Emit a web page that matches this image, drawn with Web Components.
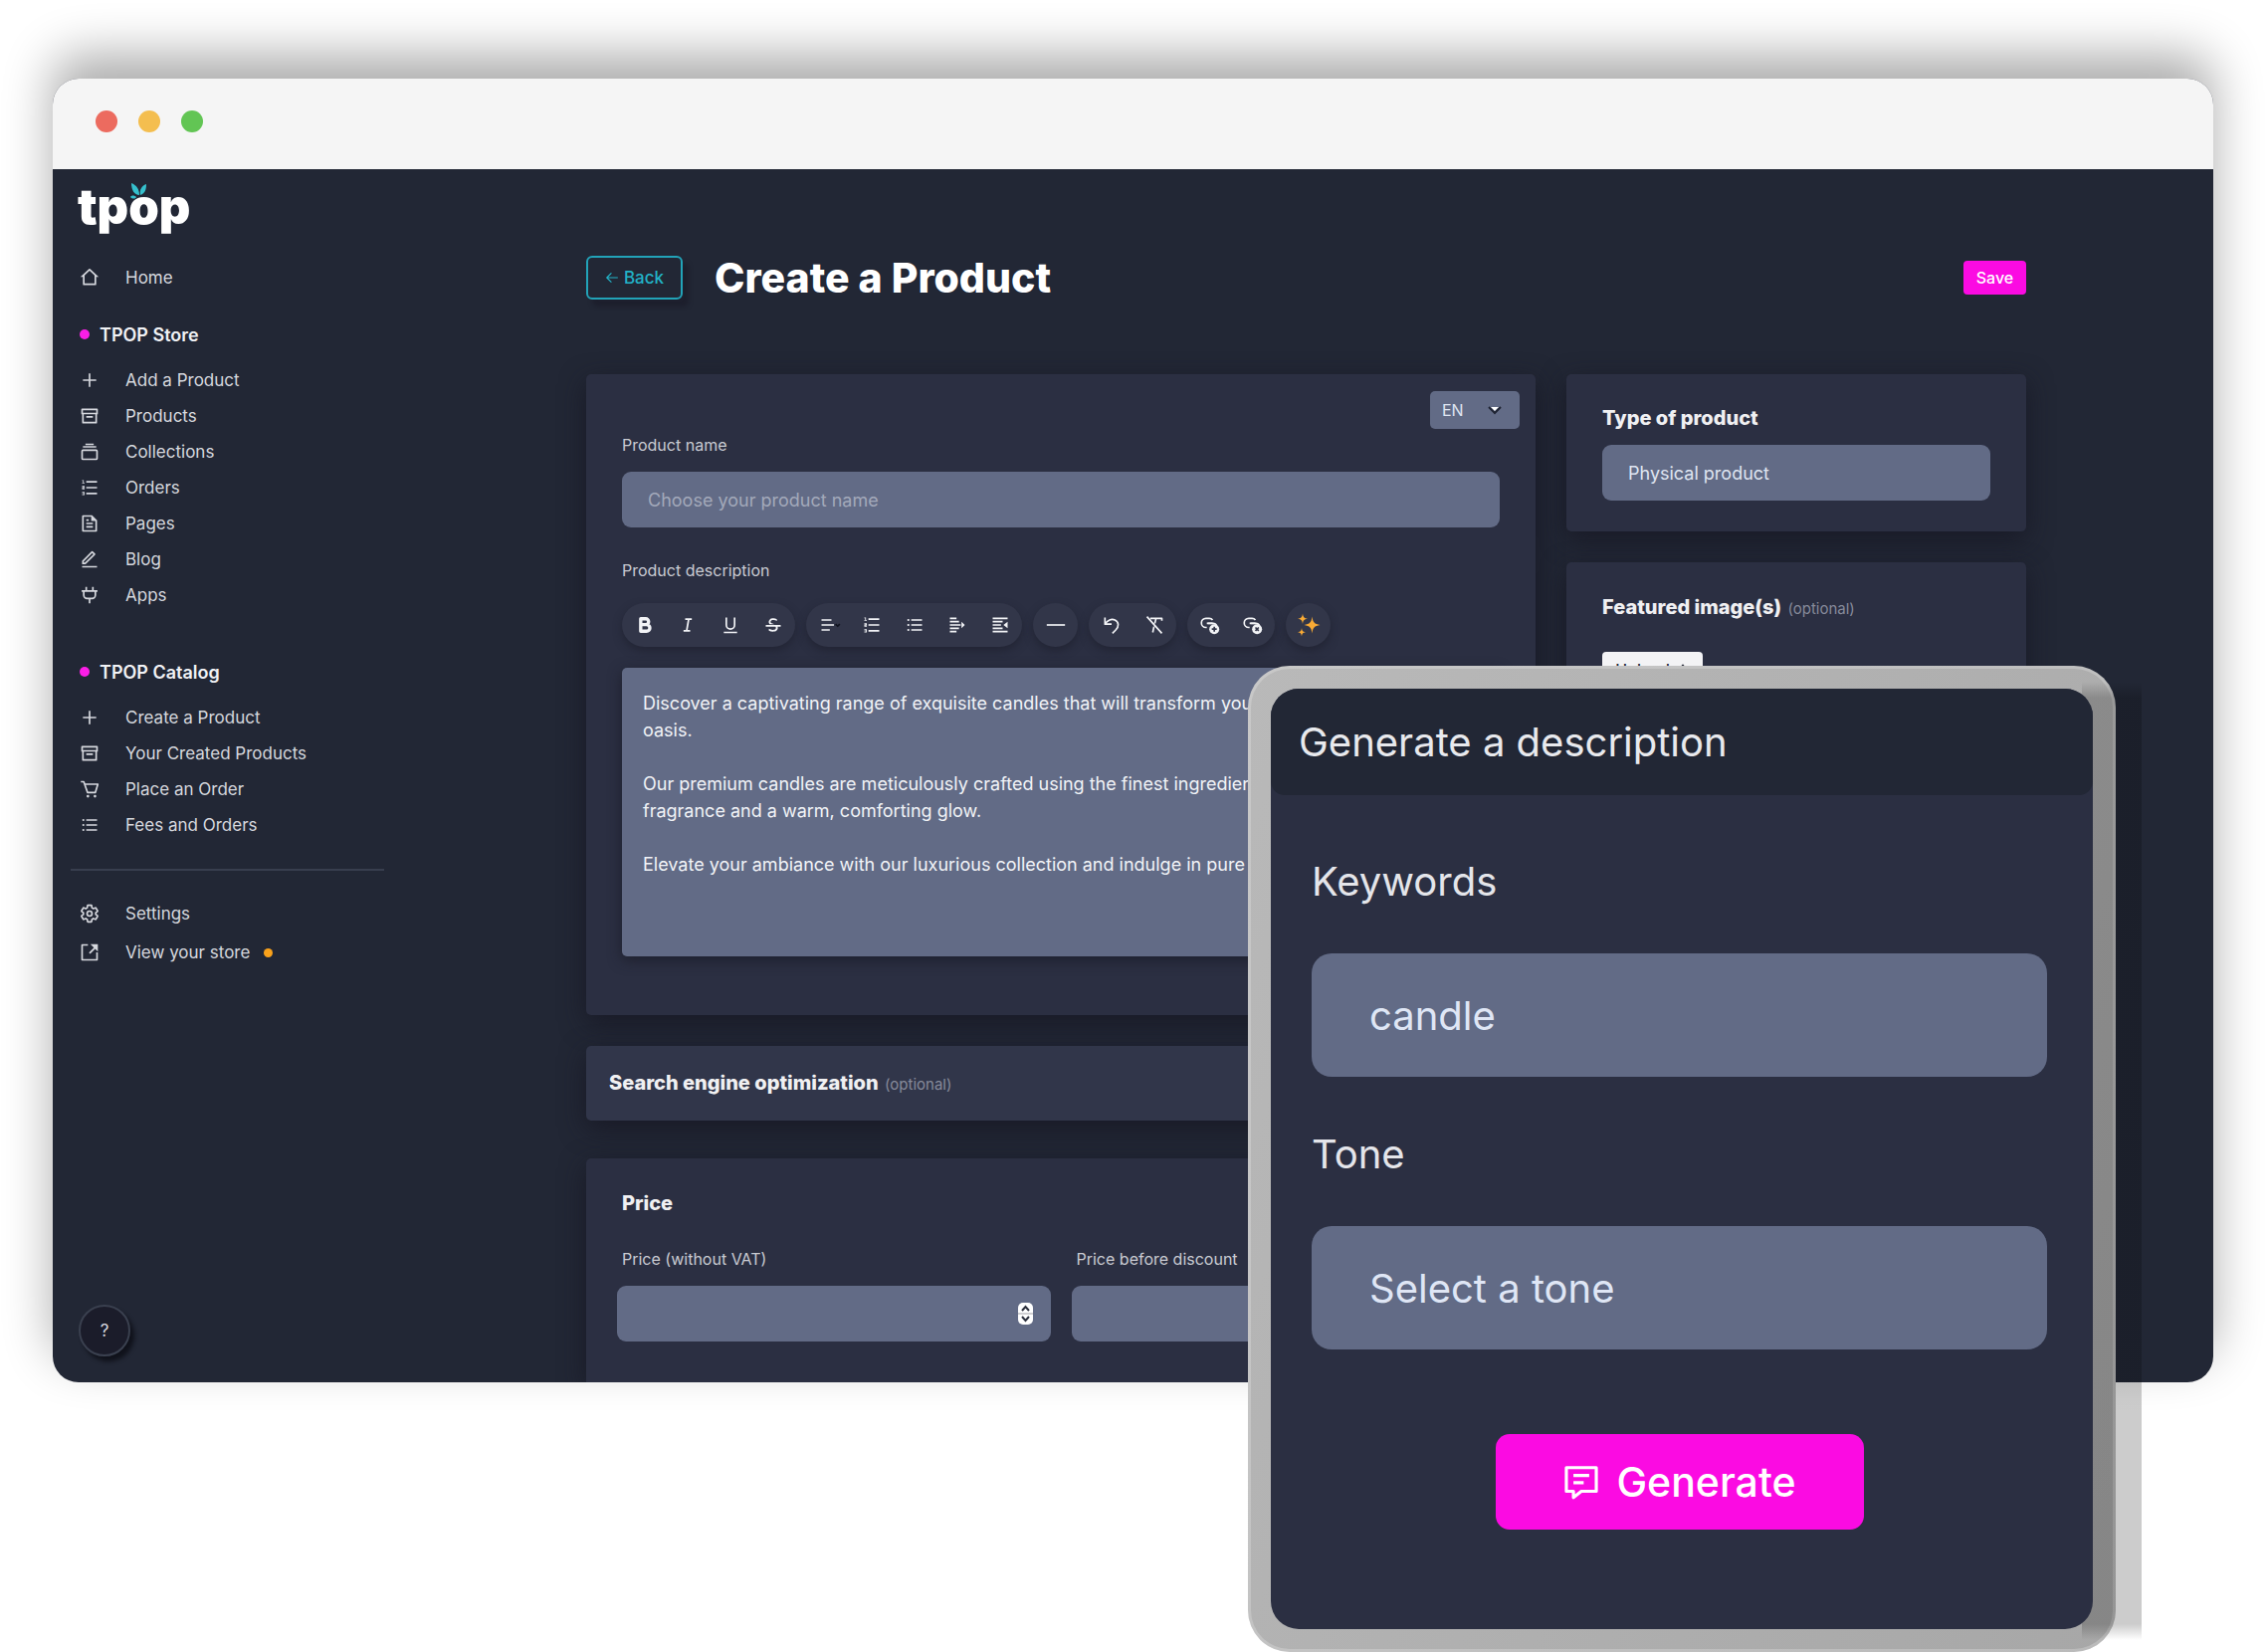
<!DOCTYPE html>
<html lang="en">
<head>
<meta charset="utf-8">
<title>Create a Product</title>
<style>
    body {
        margin: 0;
        background: #ffffff;
        font-family: Inter, "Liberation Sans", sans-serif;
        color: #dcdee4;
    }
</style>
</head>
<body>
<tp-stage>
    <browser-window>
        <side-nav slot="sidebar">
            <nav-item icon="home">Home</nav-item>
            <nav-group slot="group" heading="TPOP Store">
                <nav-item icon="add">Add a Product</nav-item>
                <nav-item icon="archive">Products</nav-item>
                <nav-item icon="stack">Collections</nav-item>
                <nav-item icon="ordered">Orders</nav-item>
                <nav-item icon="file">Pages</nav-item>
                <nav-item icon="edit">Blog</nav-item>
                <nav-item icon="plug">Apps</nav-item>
            </nav-group>
            <nav-group slot="group" heading="TPOP Catalog">
                <nav-item icon="add">Create a Product</nav-item>
                <nav-item icon="archive">Your Created Products</nav-item>
                <nav-item icon="cart">Place an Order</nav-item>
                <nav-item icon="unordered">Fees and Orders</nav-item>
            </nav-group>
            <nav-item slot="footer" icon="settings">Settings</nav-item>
            <nav-item slot="footer" icon="external" status>View your store</nav-item>
        </side-nav>
        <product-page></product-page>
    </browser-window>
    <generate-dialog slot="overlay"></generate-dialog>
</tp-stage>

<script>
const ICONS = {
    home: '<path d="M19 21H5a1 1 0 0 1-1-1v-9H1l10.3-9.4a1 1 0 0 1 1.4 0L23 11h-3v9a1 1 0 0 1-1 1zM6 19h12V9.2l-6-5.5-6 5.5V19z"/>',
    add: '<path d="M11 11V4h2v7h7v2h-7v7h-2v-7H4v-2z"/>',
    archive: '<path d="M3 10H2V4a1 1 0 0 1 1-1h18a1 1 0 0 1 1 1v6h-1v10a1 1 0 0 1-1 1H4a1 1 0 0 1-1-1V10zm16 0H5v9h14v-9zM4 5v3h16V5H4zm4 7h8v2H8v-2z"/>',
    stack: '<path d="M7 2h10v2H7zM4 5h16v2H4zM4 9h16a2 2 0 0 1 2 2v9a2 2 0 0 1-2 2H4a2 2 0 0 1-2-2v-9a2 2 0 0 1 2-2zm0 2v9h16v-9H4z"/>',
    ordered: '<path d="M8 4h13v2H8V4zM5 3v3h1v1H3V6h1V4H3V3h2zM3 14v-2.5h2V11H3v-1h3v2.5H4v.5h2v1H3zm2 5.5H3v-1h2V18H3v-1h3v4H3v-1h2v-.5zM8 11h13v2H8v-2zm0 7h13v2H8v-2z"/>',
    unordered: '<path d="M8 5h13v2H8V5zM8 11h13v2H8v-2zm0 6h13v2H8v-2z"/><circle cx="4.5" cy="6" r="1.3"/><circle cx="4.5" cy="12" r="1.3"/><circle cx="4.5" cy="18" r="1.3"/>',
    file: '<path d="M21 8v13a1 1 0 0 1-1 1H4a1 1 0 0 1-1-1V3a1 1 0 0 1 1-1h11l6 6zm-2 1h-5V4H5v16h14V9zM8 7h3v2H8V7zm0 4h8v2H8v-2zm0 4h8v2H8v-2z"/>',
    edit: '<path d="M6.4 16L16.6 5.9l-1.5-1.5L5 14.6V16h1.4zm.8 2H3v-4.2L14.4 2.3a1 1 0 0 1 1.4 0l2.9 2.9a1 1 0 0 1 0 1.4L7.2 18zM3 20h18v2H3v-2z"/>',
    plug: '<path d="M2.500 7h19M8 2v5M16 2v5M5 7v5a4 4 0 0 0 4 4h6a4 4 0 0 0 4-4V7M12 16v6" class="line"/>',
    cart: '<path d="M1.500 3H5l4.500 13h9.500l3-10H6" class="line"/><circle cx="10" cy="20.500" r="1.600"/><circle cx="18.500" cy="20.500" r="1.600"/>',
    settings: '<path class="line" d="M19.430 12.980c.04-.32.07-.64.07-.98 0-.34-.03-.66-.07-.98l2.110-1.650c.19-.15.24-.42.12-.64l-2-3.460c-.09-.16-.26-.25-.44-.25l-2.660.97c-.52-.4-1.080-.73-1.690-.98l-.38-2.650C14.460 2.180 14.250 2 14 2h-4c-.25 0-.46.18-.49.42l-.38 2.650c-.61.25-1.170.59-1.690.98l-2.490-1c-.23-.09-.49 0-.61.22l-2 3.460c-.13.22-.07.49.12.64l2.110 1.650c-.04.32-.07.65-.07.98 0 .33.03.66.07.98l-2.110 1.650c-.19.15-.24.42-.12.64l2 3.460c.12.22.38.3.61.22l2.490-1c.52.4 1.080.73 1.690.98l.38 2.650c.03.24.24.42.49.42h4c.25 0 .46-.18.49-.42l.38-2.650c.61-.25 1.170-.59 1.690-.98l2.490 1c.23.09.49 0 .61-.22l2-3.460c.12-.22.07-.49-.12-.64z"/><circle class="line" cx="12" cy="12" r="3"/>',
    external: '<path d="M10 2v2H4v16h16v-8h2v9a1 1 0 0 1-1 1H3a1 1 0 0 1-1-1V3a1 1 0 0 1 1-1h7zM13 2h9v9l-3.300-3.300-6 6-1.500-1.500 6-6z"/>',
    back: '<path class="line" d="M22 12H3M11 4l-8 8 8 8"/>',
    upload: '<path d="M12 2l8 9h-5v10H9V11H4z"/>',
    bold: '<path style="stroke-width:4" class="line" d="M7 4.500h6a3.500 3.500 0 0 1 0 7H7zM7 11.500h7a4 4 0 0 1 0 8H7z"/>',
    italic: '<path d="M15 20H7v-2h2.900l2.100-12H9V4h8v2h-2.900l-2.100 12H15z"/>',
    underline: '<path d="M8 3v9a4 4 0 1 0 8 0V3h2v9a6 6 0 1 1-12 0V3h2zM4 20h16v2H4v-2z"/>',
    strike: '<path d="M17.200 14c.2.500.3 1.100.3 1.700 0 1.300-.5 2.400-1.600 3.200-1 .7-2.500 1.100-4.300 1.100-1.600 0-3.300-.4-4.900-1.100v-2.300c1.500.9 3.100 1.300 4.700 1.300 2.500 0 3.800-.7 3.800-2.200 0-.6-.2-1.200-.6-1.600l-.1-.1H3v-2h18v2h-3.800zm-4.100-3H7.600c-.7-.8-1.100-1.600-1.100-2.500 0-1.300.5-2.300 1.400-3.200C8.800 4.400 10.300 4 12.200 4c1.500 0 2.900.3 4.200 1v2.100c-1.200-.7-2.500-1-3.900-1-2.500 0-3.700.8-3.700 2.300 0 .4.200.8.6 1.100.4.3 1 .6 1.600.8.600.2 1.300.4 2.100.7z"/>',
    align: '<path d="M3 5h12v2H3zM3 11h15v2H3zM3 17h10v2H3z"/><path class="line" style="stroke:#10131f" d="M20 11l2.500 2.500L25 11"/>',
    indent: '<path d="M3 3h8v2H3zM3 7h11v2H3zM3 11h13v2H3zM3 15h11v2H3zM3 19h8v2H3zM17 8l4 4-4 4z"/>',
    outdent: '<path d="M3 3h18v2H3zM3 7h12v2H3zM3 11h10v2H3zM3 15h12v2H3zM3 19h18v2H3zM21 8v8l-5-4z"/>',
    line: '<path d="M1 11h22v2H1z"/>',
    undo: '<path class="line" d="M4 3v8h8M4 11c3-5 8-7 12-5 5 2.500 5 8 1 12l-4 4"/>',
    clear: '<path class="line" d="M7 4h14v3M14 4l-1.500 6M11.500 14L10 21M3 2l18 20"/>',
    link: '<path class="line" d="M8 15H7A5 5 0 0 1 7 4h4a5 5 0 0 1 4 2M9 10h6a5 5 0 0 1 5 3"/><path class="line" d="M8 10h7"/><circle cx="17" cy="17" r="6"/><path class="line" style="stroke:#323649" d="M17 14v6M14 17h6"/>',
    unlink: '<path class="line" d="M8 15H7A5 5 0 0 1 7 4h4a5 5 0 0 1 4 2M9 10h6a5 5 0 0 1 5 3"/><path class="line" d="M8 10h7"/><circle cx="17" cy="17" r="6"/><path class="line" style="stroke:#323649" d="M15 15l4 4M19 15l-4 4"/>',
    sparkles: '<g fill="#f9ab35"><path d="M15.500 3.500c.8 6 2.200 7.400 8 8.500-5.800 1.100-7.200 2.500-8 8.500-.8-6-2.200-7.400-8-8.500 5.800-1.100 7.200-2.500 8-8.500z"/><path d="M6 .5c.5 3.700 1.300 4.600 5 5.200-3.700.6-4.500 1.500-5 5.200C5.500 7.200 4.700 6.300 1 5.700 4.700 5.100 5.500 4.200 6 .5z"/><path d="M5 15c.4 3 1 3.700 4 4.200-3 .5-3.600 1.300-4 4.200-.4-2.900-1-3.700-4-4.200 3-.5 3.600-1.200 4-4.200z"/></g>',
    chat: '<path class="line" d="M2.500 3h19v15H12l-5 4v-4H2.500zM7 8h10M7 12.500h6.500"/>'
};

class TpIcon extends HTMLElement {
    connectedCallback() {
        this.attachShadow({ mode: 'open' });
        this.shadowRoot.innerHTML = `
            <style>
                :host {
                    display: inline-flex;
                    flex: none;
                    width: var(--icon-size, 20px);
                    height: var(--icon-size, 20px);
                }
                svg {
                    width: 100%;
                    height: 100%;
                    fill: currentColor;
                    overflow: visible;
                }
                .line {
                    fill: none;
                    stroke: currentColor;
                    stroke-width: 2;
                    stroke-linejoin: round;
                }
            </style>
            <svg viewBox="0 0 24 24" aria-hidden="true">${ICONS[this.getAttribute('name')]}</svg>
        `;
    }
}

class TpStage extends HTMLElement {
    connectedCallback() {
        this.attachShadow({ mode: 'open' });
        this.shadowRoot.innerHTML = `
            <style>
                :host {
                    display: block;
                    position: relative;
                    box-sizing: border-box;
                    min-height: 100vh;
                    padding: 79px 52px 0 53px;
                    overflow: hidden;
                }
                /* the dialog floats over the window */
                ::slotted([slot="overlay"]) {
                    position: absolute;
                    top: 669px;
                    right: 150px;
                }
            </style>
            <slot></slot>
            <slot name="overlay"></slot>
        `;
    }
}

class BrowserWindow extends HTMLElement {
    connectedCallback() {
        this.attachShadow({ mode: 'open' });
        this.shadowRoot.innerHTML = `
            <style>
                :host {
                    display: block;
                    border-radius: 26px;
                    box-shadow: 0 -24px 50px rgba(0, 0, 0, 0.33);
                }
                .frame {
                    border-radius: 26px;
                    overflow: hidden;
                    background: #222735;
                }
                .bar {
                    display: flex;
                    align-items: center;
                    gap: 21px;
                    box-sizing: border-box;
                    height: 91px;
                    padding: 0 43px 6px;
                    background: #f5f5f5;
                }
                .bar span {
                    width: 22px;
                    height: 22px;
                    border-radius: 50%;
                }
                .content {
                    display: grid;
                    grid-template-columns: 351px minmax(0, 1fr);
                }
            </style>
            <div class="frame">
                <div class="bar">
                    <span style="background: #ec6b5f"></span>
                    <span style="background: #f4be4f"></span>
                    <span style="background: #62c554"></span>
                </div>
                <div class="content">
                    <slot name="sidebar"></slot>
                    <slot></slot>
                </div>
            </div>
        `;
    }
}

class TpLogo extends HTMLElement {
    connectedCallback() {
        this.attachShadow({ mode: 'open' });
        this.shadowRoot.innerHTML = `
            <style>
                :host {
                    display: block;
                }
                a {
                    position: relative;
                    display: inline-block;
                    font-size: 49px;
                    font-weight: 900;
                    line-height: 56px;
                    color: #ffffff;
                    text-decoration: none;
                }
                /* leaves on top of the o */
                svg {
                    position: absolute;
                    left: 52px;
                    top: 3px;
                    width: 18px;
                    height: 18px;
                }
            </style>
            <a href="#">tpop<svg viewBox="0 0 18 18" fill="#35c0cd" aria-hidden="true">
                <path d="M2 1c5 2 8 6 8 12-5 0-8-5-8-12z"/>
                <path d="M17 2c0 5-1 9-6 11-1-5 1-9 6-11z"/>
                <path d="M1 15c1-2 4-2 6 0-1 2-4 2-6 0z"/>
            </svg></a>
        `;
    }
}

class NavItem extends HTMLElement {
    connectedCallback() {
        this.attachShadow({ mode: 'open' });
        this.shadowRoot.innerHTML = `
            <style>
                :host {
                    display: block;
                }
                a {
                    display: flex;
                    align-items: center;
                    gap: 26px;
                    height: 36px;
                    padding-left: 9px;
                    font-size: 17px;
                    color: #d6d8de;
                    text-decoration: none;
                }
                i {
                    width: 9px;
                    height: 9px;
                    margin-left: -12px;
                    border-radius: 50%;
                    background: #faa21b;
                }
            </style>
            <a href="#">
                <tp-icon name="${this.getAttribute('icon')}"></tp-icon>
                <span><slot></slot></span>
                ${this.hasAttribute('status') ? '<i></i>' : ''}
            </a>
        `;
    }
}

class NavGroup extends HTMLElement {
    connectedCallback() {
        this.attachShadow({ mode: 'open' });
        this.shadowRoot.innerHTML = `
            <style>
                :host {
                    display: block;
                }
                h2 {
                    display: flex;
                    align-items: center;
                    gap: 10px;
                    height: 36px;
                    margin: 0 0 10px;
                    padding-left: 9px;
                    font-size: 18px;
                    font-weight: 600;
                    color: #f1f2f5;
                }
                h2::before {
                    content: "";
                    width: 10px;
                    height: 10px;
                    border-radius: 50%;
                    background: #fb1ee6;
                }
            </style>
            <h2>${this.getAttribute('heading')}</h2>
            <slot></slot>
        `;
    }
}

class SideNav extends HTMLElement {
    connectedCallback() {
        this.attachShadow({ mode: 'open' });
        this.shadowRoot.innerHTML = `
            <style>
                :host {
                    display: block;
                }
                nav {
                    display: flex;
                    flex-direction: column;
                    box-sizing: border-box;
                    height: 100%;
                    padding: 10px 18px 26px;
                }
                tp-logo {
                    margin: 0 0 25px 7px;
                }
                .groups {
                    display: flex;
                    flex-direction: column;
                    gap: 41px;
                    margin-top: 21px;
                }
                hr {
                    width: 100%;
                    height: 2px;
                    margin: 26px 0 25px;
                    border: 0;
                    background: #383e4e;
                }
                .footer {
                    display: flex;
                    flex-direction: column;
                    gap: 3px;
                }
                button {
                    width: 52px;
                    height: 52px;
                    margin: auto 0 0 8px;
                    border: 2px solid #3a404f;
                    border-radius: 50%;
                    background: #1b1c2a;
                    box-shadow: 4px 5px 4px #10121b;
                    font: 400 17px Inter, sans-serif;
                    color: #dcdee4;
                }
            </style>
            <nav>
                <tp-logo></tp-logo>
                <slot></slot>
                <div class="groups"><slot name="group"></slot></div>
                <hr>
                <div class="footer"><slot name="footer"></slot></div>
                <button type="button" aria-label="Help">?</button>
            </nav>
        `;
    }
}

class TpCard extends HTMLElement {
    connectedCallback() {
        this.attachShadow({ mode: 'open' });
        this.shadowRoot.innerHTML = `
            <style>
                :host {
                    display: block;
                    border-radius: 5px;
                    background: #2b2f42;
                    box-shadow: 0 8px 26px rgba(22, 22, 34, 0.75);
                }
                h2 {
                    margin: 0;
                    font-size: 20px;
                    font-weight: 800;
                    line-height: 24px;
                    color: #f0f0f2;
                }
                small {
                    margin-left: 2px;
                    font-size: 15px;
                    font-weight: 400;
                    line-height: 16px;
                    color: #868a9a;
                }
            </style>
            ${this.hasAttribute('heading') ? `<h2>${this.getAttribute('heading')} ${this.hasAttribute('optional') ? '<small>(optional)</small>' : ''}</h2>` : ''}
            <slot></slot>
        `;
    }
}

const FIELD_STYLE = `
    label {
        display: block;
        margin-bottom: 15px;
        font-size: 16px;
        line-height: 24px;
        color: #c9cbd2;
    }
    input, select {
        display: block;
        box-sizing: border-box;
        width: 100%;
        height: 56px;
        margin: 0;
        padding: 0 26px;
        border: 0;
        border-radius: 9px;
        background: #626b86;
        font: 400 18px Inter, sans-serif;
        color: #dfe5f1;
        appearance: none;
        outline: none;
    }
    input::placeholder {
        color: #a3a9ba;
        opacity: 1;
    }
`;

class TextField extends HTMLElement {
    connectedCallback() {
        this.attachShadow({ mode: 'open' });
        this.shadowRoot.innerHTML = `
            <style>
                :host {
                    display: block;
                }
                ${FIELD_STYLE}
            </style>
            <label for="field">${this.getAttribute('label')}</label>
            <input id="field" type="text" placeholder="${this.getAttribute('placeholder') || ''}">
        `;
    }
}

class PriceField extends HTMLElement {
    connectedCallback() {
        this.attachShadow({ mode: 'open' });
        this.shadowRoot.innerHTML = `
            <style>
                :host {
                    display: block;
                }
                ${FIELD_STYLE}
                label {
                    padding-left: 5px;
                }
                .box {
                    display: grid;
                    align-items: center;
                }
                .box > * {
                    grid-area: 1 / 1;
                }
                input {
                    appearance: textfield;
                }
                svg {
                    justify-self: end;
                    width: 15px;
                    height: 22px;
                    margin-right: 18px;
                }
            </style>
            <label for="price">${this.getAttribute('label')}</label>
            <div class="box">
                <input id="price" type="number">
                <svg viewBox="0 0 15 22" aria-hidden="true">
                    <rect width="15" height="22" rx="5" fill="#ffffff"/>
                    <path d="M0 11h15" stroke="#cfcfd2" stroke-width="2"/>
                    <path d="M4 8l3.500-4L11 8M4 14l3.500 4 3.500-4" fill="none" stroke="#2b2f3c" stroke-width="2"/>
                </svg>
            </div>
        `;
    }
}

class EditorToolbar extends HTMLElement {
    connectedCallback() {
        const groups = [
            ['bold', 'italic', 'underline', 'strike'],
            ['align', 'ordered', 'unordered', 'indent', 'outdent'],
            ['line'],
            ['undo', 'clear'],
            ['link', 'unlink'],
            ['sparkles']
        ];
        this.attachShadow({ mode: 'open' });
        this.shadowRoot.innerHTML = `
            <style>
                :host {
                    display: flex;
                    flex-wrap: wrap;
                    gap: 11px;
                }
                .pill {
                    display: flex;
                    padding: 0 1px;
                    border-radius: 22px;
                    background: #323649;
                    box-shadow: 0 4px 8px rgba(28, 30, 44, 0.6);
                }
                button {
                    display: grid;
                    place-items: center;
                    width: 43px;
                    height: 44px;
                    padding: 0;
                    border: 0;
                    background: none;
                    color: #f2f3f6;
                    --icon-size: 20px;
                }
                button[aria-label="sparkles"] {
                    --icon-size: 24px;
                }
            </style>
            ${groups.map(group => `<div class="pill">${group.map(name => `
                <button type="button" aria-label="${name}"><tp-icon name="${name}"></tp-icon></button>`).join('')}
            </div>`).join('')}
        `;
    }
}

class DescriptionEditor extends HTMLElement {
    connectedCallback() {
        this.attachShadow({ mode: 'open' });
        this.shadowRoot.innerHTML = `
            <style>
                :host {
                    display: block;
                }
                ${FIELD_STYLE}
                label {
                    margin-bottom: 21px;
                }
                textarea {
                    display: block;
                    box-sizing: border-box;
                    width: 100%;
                    height: 290px;
                    margin-top: 21px;
                    padding: 22px 21px;
                    border: 0;
                    border-radius: 5px;
                    background: #626b86;
                    box-shadow: 0 4px 14px rgba(26, 28, 40, 0.8);
                    font: 400 18px/27px Inter, sans-serif;
                    color: #f1f3f7;
                    white-space: pre;
                    overflow: hidden;
                    resize: none;
                    outline: none;
                }
            </style>
            <label for="description">Product description</label>
            <editor-toolbar></editor-toolbar>
            <textarea id="description">Discover a captivating range of exquisite candles that will transform your
oasis.

Our premium candles are meticulously crafted using the finest ingredients
fragrance and a warm, comforting glow.

Elevate your ambiance with our luxurious collection and indulge in pure</textarea>
        `;
    }
}

class ProductPage extends HTMLElement {
    connectedCallback() {
        this.attachShadow({ mode: 'open' });
        this.shadowRoot.innerHTML = `
            <style>
                :host {
                    display: block;
                    padding: 87px 188px 0 185px;
                }
                header {
                    display: flex;
                    align-items: center;
                    height: 44px;
                    margin-bottom: 75px;
                }
                h1 {
                    flex: 1;
                    margin: 0 0 0 32px;
                    font-size: 41px;
                    font-weight: 800;
                    line-height: 44px;
                    color: #ffffff;
                }
                .back {
                    display: flex;
                    align-items: center;
                    justify-content: center;
                    gap: 5px;
                    width: 97px;
                    height: 44px;
                    border: 2px solid #22a3b8;
                    border-radius: 6px;
                    background: #222735;
                    box-shadow: 6px 7px 4px #1d1f2d;
                    font: 500 17px Inter, sans-serif;
                    color: #22b3c8;
                    --icon-size: 14px;
                }
                .save {
                    width: 63px;
                    height: 34px;
                    padding: 0;
                    border: 0;
                    border-radius: 4px;
                    background: #fb0be2;
                    font: 500 16px Inter, sans-serif;
                    color: #ffffff;
                }
                .columns {
                    display: grid;
                    grid-template-columns: 954fr 462fr;
                    align-items: start;
                    gap: 31px;
                }
                .main, .aside {
                    display: flex;
                    flex-direction: column;
                    gap: 31px;
                }
                .details {
                    padding: 17px 36px 59px;
                }
                .language {
                    display: grid;
                    align-items: center;
                    width: 90px;
                    margin: 0 -20px 4px auto;
                }
                .language > * {
                    grid-area: 1 / 1;
                }
                ${FIELD_STYLE}
                .language select {
                    height: 38px;
                    padding: 0 12px;
                    border-radius: 5px;
                    font-size: 16px;
                }
                .language svg {
                    justify-self: end;
                    width: 14px;
                    height: 10px;
                    margin-right: 18px;
                }
                description-editor {
                    margin-top: 31px;
                }
                .seo {
                    padding: 25px 23px 26px;
                    margin-bottom: 7px;
                    background: #31364a;
                }
                .price {
                    padding: 33px 31px 41px;
                    border-radius: 5px 5px 0 0;
                }
                .price h2 {
                    margin: 0;
                    padding-left: 5px;
                    font-size: 20px;
                    font-weight: 800;
                    line-height: 24px;
                    color: #f0f0f2;
                }
                .prices {
                    display: grid;
                    grid-template-columns: 1fr 1fr;
                    gap: 21px;
                    margin-top: 32px;
                }
                .type {
                    padding: 32px 36px 31px;
                }
                .type label {
                    font-size: 20px;
                    font-weight: 800;
                    color: #f0f0f2;
                }
                .images {
                    padding: 33px 36px 120px;
                }
                .upload {
                    display: flex;
                    align-items: center;
                    justify-content: center;
                    gap: 6px;
                    width: 101px;
                    height: 36px;
                    margin-top: 33px;
                    padding: 0;
                    border: 0;
                    border-radius: 4px;
                    background: #f3f3f5;
                    font: 500 16px Inter, sans-serif;
                    color: #222735;
                    --icon-size: 14px;
                }
            </style>
            <header>
                <button class="back" type="button"><tp-icon name="back"></tp-icon>Back</button>
                <h1>Create a Product</h1>
                <button class="save" type="button">Save</button>
            </header>
            <div class="columns">
                <div class="main">
                    <tp-card class="details">
                        <div class="language">
                            <select aria-label="Language"><option>EN</option></select>
                            <svg viewBox="0 0 14 10" aria-hidden="true">
                                <path d="M3 2h8L7 6z" fill="#ffffff"/>
                                <path d="M1 2l6 6 6-6" fill="none" stroke="#1f2433" stroke-width="2"/>
                            </svg>
                        </div>
                        <text-field label="Product name" placeholder="Choose your product name"></text-field>
                        <description-editor></description-editor>
                    </tp-card>
                    <tp-card class="seo" heading="Search engine optimization" optional></tp-card>
                    <tp-card class="price">
                        <h2>Price</h2>
                        <div class="prices">
                            <price-field label="Price (without VAT)"></price-field>
                            <price-field label="Price before discount"></price-field>
                        </div>
                    </tp-card>
                </div>
                <div class="aside">
                    <tp-card class="type">
                        <label for="type">Type of product</label>
                        <select id="type"><option>Physical product</option></select>
                    </tp-card>
                    <tp-card class="images" heading="Featured image(s)" optional>
                        <button class="upload" type="button">Upload<tp-icon name="upload"></tp-icon></button>
                    </tp-card>
                </div>
            </div>
        `;
    }
}

class GenerateDialog extends HTMLElement {
    connectedCallback() {
        this.attachShadow({ mode: 'open' });
        this.shadowRoot.innerHTML = `
            <style>
                :host {
                    display: block;
                    box-sizing: border-box;
                    width: 872px;
                    padding: 23px;
                    border-radius: 42px;
                    background: linear-gradient(115deg, #b9b9b9, #a7a7a7);
                    box-shadow: inset 0 0 0 3px rgba(255, 255, 255, 0.22);
                }
                /* hard-edged shade along the right side */
                :host::before {
                    content: "";
                    position: absolute;
                    top: 16px;
                    bottom: 12px;
                    right: -26px;
                    width: 60px;
                    background: linear-gradient(rgba(0, 0, 0, 0), rgba(0, 0, 0, 0.2) 16px calc(100% - 16px), rgba(0, 0, 0, 0));
                }
                section {
                    position: relative;
                    border-radius: 28px;
                    overflow: hidden;
                    background: #2b2f42;
                }
                h2 {
                    margin: 0;
                    padding: 0 28px;
                    border-radius: 0 0 14px 14px;
                    background: #222735;
                    font-size: 40px;
                    font-weight: 400;
                    line-height: 107px;
                    color: #e8e9ed;
                }
                form {
                    padding: 63px 46px 100px 41px;
                }
                label {
                    display: block;
                    margin-bottom: 48px;
                    font-size: 40px;
                    line-height: 48px;
                    color: #e4e5ea;
                }
                input, select {
                    display: block;
                    box-sizing: border-box;
                    width: 100%;
                    height: 124px;
                    margin: 0 0 54px;
                    padding: 0 58px;
                    border: 0;
                    border-radius: 20px;
                    background: #626b86;
                    font: 400 40px Inter, sans-serif;
                    color: #dfe6f5;
                    appearance: none;
                    outline: none;
                }
                button {
                    display: flex;
                    align-items: center;
                    justify-content: center;
                    gap: 16px;
                    width: 370px;
                    height: 96px;
                    margin: 85px auto 0;
                    padding: 0;
                    border: 0;
                    border-radius: 14px;
                    background: #fb0be2;
                    font: 500 41px Inter, sans-serif;
                    color: #ffffff;
                    --icon-size: 38px;
                }
                select {
                    margin: 0;
                }
            </style>
            <section role="dialog" aria-labelledby="title">
                <h2 id="title">Generate a description</h2>
                <form>
                    <label for="keywords">Keywords</label>
                    <input id="keywords" type="text" value="candle">
                    <label for="tone">Tone</label>
                    <select id="tone"><option>Select a tone</option></select>
                    <button type="button"><tp-icon name="chat"></tp-icon>Generate</button>
                </form>
            </section>
        `;
    }
}

customElements.define('tp-icon', TpIcon);
customElements.define('tp-logo', TpLogo);
customElements.define('tp-stage', TpStage);
customElements.define('browser-window', BrowserWindow);
customElements.define('nav-item', NavItem);
customElements.define('nav-group', NavGroup);
customElements.define('side-nav', SideNav);
customElements.define('tp-card', TpCard);
customElements.define('text-field', TextField);
customElements.define('price-field', PriceField);
customElements.define('editor-toolbar', EditorToolbar);
customElements.define('description-editor', DescriptionEditor);
customElements.define('product-page', ProductPage);
customElements.define('generate-dialog', GenerateDialog);
</script>
</body>
</html>
